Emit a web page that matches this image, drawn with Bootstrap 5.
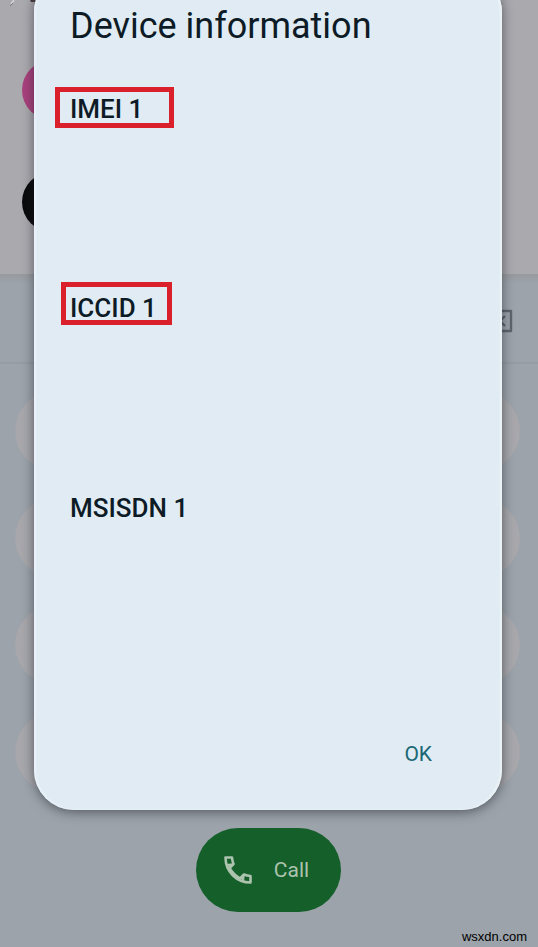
<!DOCTYPE html>
<html lang="en">
<head>
<meta charset="utf-8">
<meta name="viewport" content="width=device-width, initial-scale=1">
<title>Device information</title>
<link href="https://cdn.jsdelivr.net/npm/bootstrap@5.3.0/dist/css/bootstrap.min.css" rel="stylesheet">
<style>
body{background:#9ca3aa;font-family:Roboto,"Liberation Sans",sans-serif;color:#0d1b26}
.phone{min-height:100vh;overflow:hidden}
.contacts{background:#aaa9ae;height:274px;padding:60px 22px 0;gap:52px}
.avatar{width:60px;height:60px}
.avatar-pink{background:#a9417d}
.avatar-black{background:#0a0a0c}
.scrap{left:8px;top:0}
.number-row{height:90px;padding:6px 25px 0;border-bottom:2px solid #959ca3;background:linear-gradient(#979ba0,#9ca3aa 10px)}
.number-row input{color:inherit}
.keypad{display:grid;grid-template-columns:repeat(3,1fr);gap:27px 16px;padding:27px 18px 0 15px}
.dial-key{height:80px;border:0;border-radius:40px;background:#a7a7ac}
.call-btn{width:145px;height:84px;margin:36px 2px 0 0;padding:0 3px 0 0;border-radius:42px;background:#155f2b;color:#acc3ae;font-size:21px;line-height:24px;gap:22px}
.call-btn:hover{background:#11562a;color:#acc3ae}
.sheet{top:-28px;left:34px;right:36px;height:838px;padding:33px 34px 0 36px;border-radius:40px;background:#e0ebf4;box-shadow:0 2px 12px rgba(20,26,32,.55),inset -2px 0 2px #edf4f5,inset 2px 0 2px #ebf2fa}
.sheet-title{font-size:36px;line-height:42px}
.field{height:200px;font-size:26px;line-height:34px;font-weight:500}
.fields{padding-top:44px}
.outlined{border:5px solid #da202b}
.mark-imei{width:119px;height:41px;margin:-4px 0 0 -15px;padding:0 0 0 10px}
.mark-iccid{width:111px;height:43px;margin:-9px 0 0 -9px;padding:4px 0 0 4px}
.ok-btn{font-size:21px;line-height:24px;color:#1b6874;right:62px;bottom:36px}
.site{font:13px/16px "Liberation Sans",sans-serif;color:#000;right:11px;bottom:2px}
</style>
<script src="https://cdn.jsdelivr.net/npm/bootstrap@5.3.0/dist/js/bootstrap.bundle.min.js"></script>
</head>
<body>
<div class="phone position-relative">
  <main>
    <section class="contacts d-flex flex-column position-relative" aria-label="Contacts">
      <svg class="scrap position-absolute" width="28" height="12" viewBox="0 0 28 12" aria-hidden="true"><path d="M6 0L3 4" stroke="#d4d3d7" stroke-width="1.5"/><path d="M5 3L2 6" stroke="#7c7b80"/><path d="M22 0h6v2h-5z" fill="#4b3d3f"/></svg>
      <span class="avatar avatar-pink rounded-circle"></span>
      <span class="avatar avatar-black rounded-circle"></span>
    </section>
    <section aria-label="Dialer">
      <div class="number-row d-flex align-items-center">
        <input class="form-control bg-transparent border-0 shadow-none" type="tel" aria-label="Phone number">
        <button class="btn p-0 border-0 d-flex" type="button" aria-label="Delete digit">
          <svg width="33" height="24" viewBox="0 0 33 24" fill="none" stroke="#5e656c" stroke-width="2.4" stroke-linejoin="round"><path d="M9 2H31V22H9L2 12ZM15 7L25 17M25 7L15 17"/></svg>
        </button>
      </div>
      <div class="keypad">
        <button class="dial-key" type="button" aria-label="1"></button><button class="dial-key" type="button" aria-label="2"></button><button class="dial-key" type="button" aria-label="3"></button>
        <button class="dial-key" type="button" aria-label="4"></button><button class="dial-key" type="button" aria-label="5"></button><button class="dial-key" type="button" aria-label="6"></button>
        <button class="dial-key" type="button" aria-label="7"></button><button class="dial-key" type="button" aria-label="8"></button><button class="dial-key" type="button" aria-label="9"></button>
        <button class="dial-key" type="button" aria-label="Star"></button><button class="dial-key" type="button" aria-label="0"></button><button class="dial-key" type="button" aria-label="Hash"></button>
      </div>
      <div class="d-flex justify-content-center">
        <button class="call-btn btn border-0 d-flex align-items-center justify-content-center" type="button">
          <svg width="28" height="28" viewBox="0 0 28 28" fill="none" stroke="currentColor" stroke-width="2.6" stroke-linejoin="round" aria-hidden="true"><path d="M1.500 1.500H8Q8.300 5 9.500 8L5.500 12Q9.500 19 16 22.500L20 18.500Q23 19.700 26.500 20V26.500C12.500 26.500 1.500 15.500 1.500 1.500ZM3 9.200L8.800 8.600M18.800 25.200L19.400 19.200"/></svg>
          Call
        </button>
      </div>
    </section>
  </main>
  <div class="sheet position-absolute" role="dialog" aria-labelledby="sheet-title">
    <h1 class="sheet-title fw-normal m-0" id="sheet-title">Device information</h1>
    <div class="fields">
      <div class="field d-flex align-items-start"><div class="outlined mark-imei">IMEI 1</div></div>
      <div class="field d-flex align-items-start"><div class="outlined mark-iccid">ICCID 1</div></div>
      <div class="field d-flex align-items-start">MSISDN 1</div>
    </div>
    <button class="ok-btn btn p-2 border-0 position-absolute" type="button">OK</button>
  </div>
  <span class="site position-absolute">wsxdn.com</span>
</div>
</body>
</html>
